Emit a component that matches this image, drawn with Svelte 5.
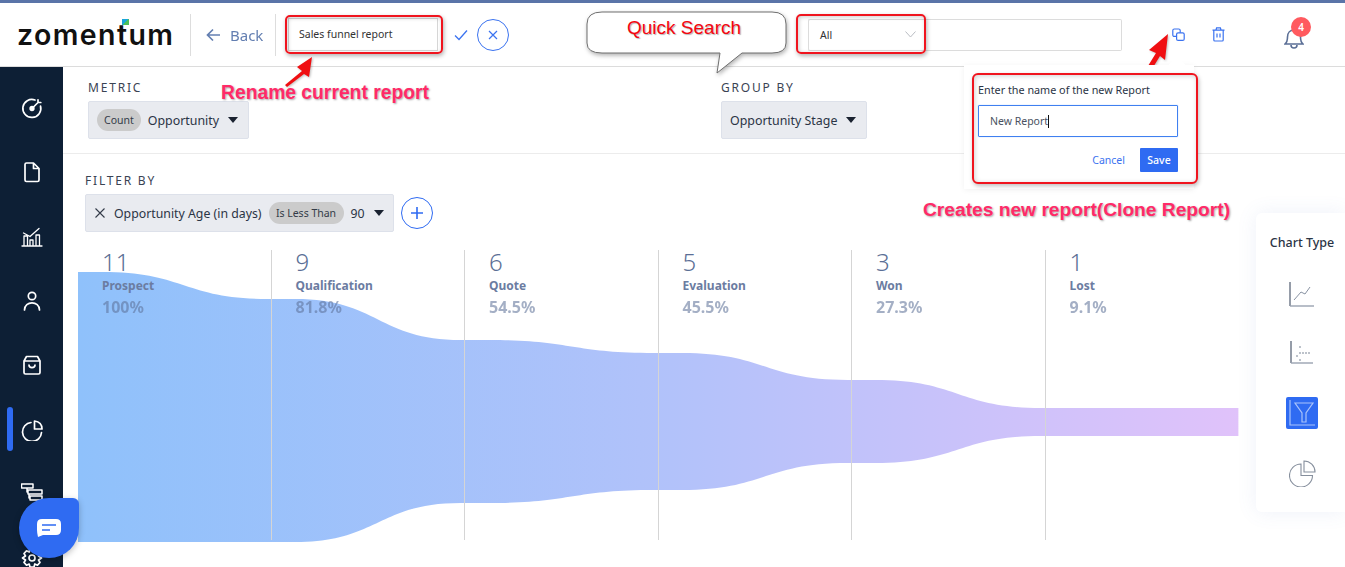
<script lang="ts">
  const navIcons = [
    'target',
    'file',
    'bars',
    'user',
    'bag',
    'pie',
    'tree',
    'gear',
  ];

  const stages = [
    { count: 11, name: 'Prospect', pct: '100%' },
    { count: 9, name: 'Qualification', pct: '81.8%' },
    { count: 6, name: 'Quote', pct: '54.5%' },
    { count: 5, name: 'Evaluation', pct: '45.5%' },
    { count: 3, name: 'Won', pct: '27.3%' },
    { count: 1, name: 'Lost', pct: '9.1%' },
  ];

  const COL_W = 193.4;
  // funnel edges at the column lines, x measured from funnel's left side
  const tops = [0, 27, 68, 81, 108, 136, 136];
  const bottoms = [270, 270, 231, 218, 191, 164, 164];
  // each step starts a bit after its column line and ends just before the next
  const LEAD = 24;
  const TAIL = 4;

  function funnelPath(): string {
    let d = `M 0 ${tops[0]}`;
    for (let i = 0; i < 6; i++) {
      const x1 = i * COL_W + LEAD;
      const x2 = (i + 1) * COL_W - TAIL;
      const m = (x1 + x2) / 2;
      d += ` L ${x1} ${tops[i]} C ${m} ${tops[i]}, ${m} ${tops[i + 1]}, ${x2} ${tops[i + 1]}`;
    }
    d += ` L ${6 * COL_W} ${tops[6]} L ${6 * COL_W} ${bottoms[6]}`;
    for (let i = 5; i >= 0; i--) {
      const x1 = i * COL_W + LEAD;
      const x2 = (i + 1) * COL_W - TAIL;
      const m = (x1 + x2) / 2;
      d += ` L ${x2} ${bottoms[i + 1]} C ${m} ${bottoms[i + 1]}, ${m} ${bottoms[i]}, ${x1} ${bottoms[i]}`;
    }
    return d + ` L 0 ${bottoms[0]} Z`;
  }
</script>

<div class="page">
  <header class="topbar">
    <div class="logo">zomen<span class="logo-t">t<i></i></span>um</div>
    <div class="back">
      <svg width="15" height="14" viewBox="0 0 15 14" fill="none" stroke="#5b78ad" stroke-width="1.7"><path d="M14 7 H1.5 M7 1.5 L1.5 7 L7 12.5" /></svg>
      <span>Back</span>
    </div>
    <div class="name-field">Sales funnel report</div>
    <svg class="check" width="14" height="12" viewBox="0 0 14 12" fill="none" stroke="#3b73f0" stroke-width="1.3"><path d="M1 6.5 L5 10.5 L13 1.5" /></svg>
    <div class="x-circle">
      <svg width="10" height="10" viewBox="0 0 10 10" fill="none" stroke="#3b73f0" stroke-width="1.2"><path d="M1 1 L9 9 M9 1 L1 9" /></svg>
    </div>
    <div class="search">
      <div class="search-type">
        <span>All</span>
        <svg width="11" height="7" viewBox="0 0 11 7" fill="none" stroke="#b9bcc2" stroke-width="1"><path d="M0.5 0.5 L5.5 6 L10.5 0.5" /></svg>
      </div>
      <div class="search-input"></div>
    </div>
    <svg class="copy" width="13" height="14" viewBox="0 0 13 14" fill="none" stroke="#3b73f0" stroke-width="1.2">
      <rect x="0.8" y="1" width="7.4" height="7.4" rx="1.5" />
      <rect x="4.6" y="4.8" width="7.6" height="7.6" rx="1.5" fill="#fff" />
    </svg>
    <svg class="trash" width="13" height="15" viewBox="0 0 13 15" fill="none" stroke="#3b73f0" stroke-width="1.2">
      <path d="M0.5 3.2 H12.5 M4 3 L4.6 0.8 H8.4 L9 3 M1.8 3.2 V13 Q1.8 14 2.8 14 H10.2 Q11.2 14 11.2 13 V3.2 M5 6.5 V10.5 M8 6.5 V10.5" />
    </svg>
    <div class="bell">
      <svg width="20" height="21" viewBox="0 0 20 21" fill="none" stroke="#5b6f96" stroke-width="1.6">
        <path d="M1 16 H19 C16.5 14 16.5 12 16.5 9 C16.5 5 14 2 10 2 C6 2 3.5 5 3.5 9 C3.5 12 3.5 14 1 16 Z M7 17 C7 21 13 21 13 17" />
      </svg>
      <span class="badge">4</span>
    </div>
  </header>

  <div class="body">
    <nav class="sidebar">
      {#each navIcons as icon}
        <div class="nav-item" class:active={icon === 'pie'}>
          <svg width="22" height="22" viewBox="0 0 22 22" fill="none" stroke="#fff" stroke-width="1.7" stroke-linecap="round" stroke-linejoin="round">
            {#if icon === 'target'}
              <path d="M14 3 A9 9 0 1 0 19.5 9" />
              <circle cx="11" cy="11.5" r="1.8" fill="#fff" />
              <path d="M11 11.5 L17 5.5 M17 2.8 L17 5.5 L19.8 5.5" />
            {:else if icon === 'file'}
              <path d="M4 3.5 Q4 2 5.5 2 H12.5 L18 7.5 V19 Q18 20.5 16.5 20.5 H5.5 Q4 20.5 4 19 Z M12.5 2 V7.5 H18" />
            {:else if icon === 'bars'}
              <path d="M1 20 H21 M3 19.5 V10 H6.5 V19.5 M9 19.5 V14 H12 V19.5 M15 19.5 V9 H18.5 V19.5 M2.5 7 L9 10.5 L18 2.5" stroke-width="1.3" />
            {:else if icon === 'user'}
              <circle cx="11" cy="6" r="3.7" />
              <path d="M3.5 20 C3.5 10.5 18.5 10.5 18.5 20" />
            {:else if icon === 'bag'}
              <path d="M3 7 L5.5 2.5 H16.5 L19 7 V18.5 Q19 20 17.5 20 H4.5 Q3 20 3 18.5 Z M3 7 H19 M8 11 C8 14.5 14 14.5 14 11" />
            {:else if icon === 'pie'}
              <path d="M10 3.5 A9.5 9.5 0 1 0 20.5 13.5" />
              <path d="M13.5 2 Q21 3 21 10 H13.5 Z" />
            {:else if icon === 'tree'}
              <path d="M0.5 1 H12 V5 H0.5 Z M7 7 H21 V11 H7 Z M9 13 H21 V17 H9 Z M6 5 V9 H7 M8 11 V15 H9" stroke-width="1.5" />
            {:else}
              <path d="M9 2 H13 L13.8 5 L16.5 3.8 L19 6.5 L17.5 9 L20.5 11 L17.5 13 L19 15.5 L16.5 18.2 L13.8 17 L13 20 H9 L8.2 17 L5.5 18.2 L3 15.5 L4.5 13 L1.5 11 L4.5 9 L3 6.5 L5.5 3.8 L8.2 5 Z" />
              <circle cx="11" cy="11" r="3" />
            {/if}
          </svg>
        </div>
      {/each}
    </nav>

    <main class="content">
      <section class="selectors">
        <div class="metric">
          <div class="label">METRIC</div>
          <div class="select">
            <span class="pill">Count</span>
            <span>Opportunity</span>
            <i class="caret"></i>
          </div>
        </div>
        <div class="group">
          <div class="label">GROUP BY</div>
          <div class="select">
            <span>Opportunity Stage</span>
            <i class="caret"></i>
          </div>
        </div>
      </section>

      <section class="filters">
        <div class="label">FILTER BY</div>
        <div class="filter-row">
          <div class="select filter">
            <svg width="10" height="10" viewBox="0 0 10 10" fill="none" stroke="#333b48" stroke-width="1.1"><path d="M0.5 0.5 L9.5 9.5 M9.5 0.5 L0.5 9.5" /></svg>
            <span>Opportunity Age (in days)</span>
            <span class="pill">Is Less Than</span>
            <span>90</span>
            <i class="caret"></i>
          </div>
          <div class="add">
            <svg width="12" height="12" viewBox="0 0 12 12" fill="none" stroke="#2f6bf2" stroke-width="1.6"><path d="M6 0 V12 M0 6 H12" /></svg>
          </div>
        </div>
      </section>

      <section class="funnel">
        <svg class="funnel-svg" width="1161" height="271" viewBox="0 0 1161 271">
          <defs>
            <linearGradient id="funnel-fill" x1="0" y1="0" x2="1" y2="0">
              <stop offset="0" stop-color="#8fc1fb" />
              <stop offset="0.5" stop-color="#b1c2fa" />
              <stop offset="1" stop-color="#e0c2fa" />
            </linearGradient>
          </defs>
          <path d={funnelPath()} fill="url(#funnel-fill)" />
        </svg>
        <div class="stages">
          {#each stages as s}
            <div class="stage">
              <div class="count">{s.count}</div>
              <div class="stage-name">{s.name}</div>
              <div class="pct">{s.pct}</div>
            </div>
          {/each}
        </div>
      </section>
    </main>

    <aside class="chart-types">
      <div class="chart-title">Chart Type</div>
      <svg width="26" height="26" viewBox="0 0 26 26" fill="none" stroke="#2d3b52" stroke-width="1">
        <path d="M1 1 V25" />
        <path d="M1 25 H25" stroke="#9aa3b0" stroke-width="1.4" />
        <path d="M5 19 L12 11 L16 13 L21 6" stroke="#8993a3" />
      </svg>
      <svg width="24" height="24" viewBox="0 0 24 24" fill="none" stroke="#2d3b52" stroke-width="1">
        <path d="M1 1 V23" />
        <path d="M1 23 H23" stroke="#9aa3b0" stroke-width="1.4" />
        <path d="M7 15 V17 M10 12 V14 M10 19 V21 M10 6 V8 M13 12 V14 M16 12 V14 M19 12 V14" stroke="#7d8797" />
      </svg>
      <div class="chart-active">
        <svg width="26" height="26" viewBox="0 0 26 26" fill="none" stroke="#a9c3fb" stroke-width="1.2">
          <path d="M1 0 V25 H26" />
          <path d="M6 3 H24 L17 13 V22 H13 V13 Z" />
        </svg>
      </div>
      <svg width="27" height="27" viewBox="0 0 27 27" fill="none" stroke="#868f9d" stroke-width="1.1">
        <path d="M12 4 A11.5 11.5 0 1 0 23.5 15.5 H12 Z" />
        <path d="M15 1 A11 11 0 0 1 26 12 H15 Z" />
      </svg>
    </aside>
  </div>

  <!-- screenshot annotations over the page -->
  <div class="mark mark-name"></div>
  <div class="mark mark-all"></div>
  <svg class="arrow arrow-name" width="30" height="32" viewBox="0 0 30 32"><path d="M28 1 L13 11 L18 15 L1 29 L3 31 L20 18 L25 21 Z" fill="#f00f12" /></svg>
  <svg class="arrow arrow-copy" width="24" height="37" viewBox="0 0 24 37"><path d="M22 1 L3 17 L10 20 L2 33 L6 36 L14 23 L19 27 Z" fill="#f00f12" /></svg>
  <div class="note note-rename">Rename current report</div>
  <div class="note note-clone">Creates new report(Clone Report)</div>

  <svg class="bubble" width="206" height="64" viewBox="0 0 206 64">
    <path d="M17 1 H187 Q201 1 201 13 V32 Q201 42 187 42 H157 L132 62 L135 42 H17 Q2 42 2 32 V13 Q2 1 17 1 Z" fill="#fff" stroke="#6f6f6f" stroke-width="1" />
  </svg>
  <div class="bubble-text">Quick Search</div>

  <div class="popover">
    <span class="pop-tip"></span>
    <div class="pop-inner">
      <div class="pop-title">Enter the name of the new Report</div>
      <div class="pop-input"><span>New Report</span><i></i></div>
      <div class="pop-actions">
        <span class="cancel">Cancel</span>
        <span class="save">Save</span>
      </div>
    </div>
  </div>

  <div class="chat">
    <svg width="24" height="18" viewBox="0 0 24 18">
      <path d="M5 0 H19 Q24 0 24 5 V11 Q24 16 19 16 H6 L1 18 Q0 14 0 11 V5 Q0 0 5 0 Z" fill="#fff" />
      <path d="M5 6 H19 M5 11 H13" stroke="#2f6bf2" stroke-width="1.6" />
    </svg>
  </div>
</div>

<style>
  :global(body) {
    margin: 0;
    background: #fff;
    overflow: hidden;
  }

  .page {
    position: relative;
    width: 1345px;
    height: 567px;
    overflow: hidden;
    font-family: 'Noto Sans', sans-serif;
    color: #2b3445;
    display: flex;
    flex-direction: column;
  }

  .topbar {
    height: 63px;
    flex: none;
    display: flex;
    align-items: center;
    border-top: 3px solid #5a74a8;
    border-bottom: 1px solid #dcdcdc;
    background: #fff;
  }

  .logo {
    width: 179px;
    flex: none;
    padding-left: 17px;
    box-sizing: border-box;
    font-family: 'Inter', sans-serif;
    font-size: 28.5px;
    font-weight: 600;
    color: #111;
    line-height: 30px;
    white-space: nowrap;
    letter-spacing: 1.4px;
  }

  .logo-t {
    position: relative;
  }

  .logo-t i {
    position: absolute;
    right: -1px;
    top: 2px;
    width: 7px;
    height: 6px;
    background: linear-gradient(135deg, #1aa6d9 50%, #4cc15c 50%);
  }

  .back {
    width: 86px;
    height: 42px;
    flex: none;
    box-sizing: border-box;
    display: flex;
    align-items: center;
    gap: 9px;
    margin-left: 11px;
    padding-left: 15px;
    border-left: 1px solid #dcdcdc;
    border-right: 1px solid #dcdcdc;
    margin-right: 12px;
    color: #5b78ad;
    font-size: 15px;
    opacity: 0.95;
  }

  .name-field {
    width: 150px;
    height: 33px;
    flex: none;
    box-sizing: border-box;
    padding-left: 10px;
    border: 1px solid #d6d6d6;
    font-size: 10.5px;
    line-height: 31px;
    color: #333;
  }

  .check {
    margin-left: 16px;
    flex: none;
  }

  .x-circle {
    width: 32px;
    height: 32px;
    margin-left: 9px;
    flex: none;
    box-sizing: border-box;
    border: 1px solid #3b73f0;
    border-radius: 50%;
    display: flex;
    align-items: center;
    justify-content: center;
  }

  .search {
    display: flex;
    margin-left: 299px;
    flex: none;
  }

  .search-type {
    width: 115px;
    height: 32px;
    box-sizing: border-box;
    border: 1px solid #dcdcdc;
    border-right: none;
    border-radius: 2px 0 0 2px;
    display: flex;
    align-items: center;
    justify-content: space-between;
    padding: 0 7px 0 11px;
    font-size: 10.5px;
    color: #333;
  }

  .search-input {
    width: 199px;
    height: 32px;
    box-sizing: border-box;
    border: 1px solid #dcdcdc;
    border-left: none;
    border-radius: 0 2px 2px 0;
  }

  .copy {
    margin-left: 50px;
    flex: none;
  }

  .trash {
    margin-left: 27px;
    flex: none;
  }

  .bell {
    position: relative;
    margin-left: 59px;
    width: 20px;
    height: 21px;
    margin-top: 7px;
    flex: none;
  }

  .badge {
    position: absolute;
    left: 7px;
    top: -11px;
    width: 20px;
    height: 20px;
    border-radius: 50%;
    background: #ff5a5f;
    color: #fff;
    font-size: 10px;
    font-weight: 600;
    text-align: center;
    line-height: 20px;
  }

  .body {
    flex: 1;
    display: flex;
    position: relative;
    min-height: 0;
  }

  .sidebar {
    width: 63px;
    flex: none;
    background: #0d1f35;
    display: flex;
    flex-direction: column;
    padding-top: 9px;
    box-sizing: border-box;
  }

  .nav-item {
    height: 64.3px;
    flex: none;
    display: flex;
    align-items: center;
    justify-content: center;
    padding-left: 1px;
    position: relative;
  }

  .nav-item.active::before {
    content: '';
    position: absolute;
    left: 7px;
    top: 10px;
    width: 6px;
    height: 44px;
    background: #2f6bf2;
    border-radius: 3px;
  }

  .content {
    flex: 1;
    min-width: 0;
    display: flex;
    flex-direction: column;
  }

  .selectors {
    display: flex;
    height: 87px;
    flex: none;
    box-sizing: border-box;
    padding: 14px 0 0 25px;
    border-bottom: 1px solid #ececec;
  }

  .metric {
    width: 633px;
  }

  .label {
    font-size: 12px;
    letter-spacing: 1.8px;
    line-height: 14px;
    color: #3a4353;
    margin-bottom: 6px;
  }

  .select {
    display: inline-flex;
    align-items: center;
    height: 38px;
    box-sizing: border-box;
    padding: 0 10px 0 8px;
    gap: 7px;
    background: #e9ebf0;
    border: 1px solid #dde1ea;
    border-radius: 2px;
    font-size: 12.4px;
    color: #2b3445;
  }

  .pill {
    height: 22px;
    line-height: 22px;
    padding: 0 7px;
    border-radius: 11px;
    background: #cbcbcb;
    font-size: 10.5px;
    color: #333b48;
  }

  .caret {
    width: 0;
    height: 0;
    margin-left: 2px;
    border-left: 5.5px solid transparent;
    border-right: 5.5px solid transparent;
    border-top: 6px solid #1a2230;
  }

  .filters {
    flex: none;
    padding: 20px 0 0 22px;
  }

  .filter-row {
    display: flex;
    align-items: center;
    gap: 7px;
  }

  .filter {
    padding-left: 9px;
    gap: 7px;
    padding-right: 9px;
    font-size: 12.3px;
  }

  .filter svg {
    margin-right: 2px;
  }

  .filter .pill {
    width: 75px;
    box-sizing: border-box;
    padding: 0;
    text-align: center;
  }

  .add {
    width: 32px;
    height: 32px;
    box-sizing: border-box;
    border: 1px solid #2f6bf2;
    border-radius: 50%;
    display: flex;
    align-items: center;
    justify-content: center;
  }

  .funnel {
    position: relative;
    flex: none;
    margin: 18px 0 0 15px;
    height: 292px;
  }

  .funnel-svg {
    position: absolute;
    left: 0;
    top: 22px;
    display: block;
  }

  .stages {
    position: relative;
    display: grid;
    grid-template-columns: repeat(6, 193.5px);
    height: 290px;
  }

  .stage {
    padding-left: 24px;
    box-sizing: border-box;
    border-right: 1px solid #d5d5d5;
  }

  .stage:last-child {
    border-right: none;
  }

  .count {
    font-size: 24px;
    font-weight: 300;
    line-height: 24px;
    color: #5b6f96;
  }

  .stage-name {
    font-size: 12px;
    font-weight: 700;
    line-height: 16px;
    margin-top: 4px;
    color: #6b7ca1;
  }

  .pct {
    font-size: 16px;
    font-weight: 700;
    line-height: 22px;
    margin-top: 2px;
    color: #5b6f96;
    opacity: 0.55;
  }

  .chart-types {
    position: absolute;
    right: 0;
    top: 146px;
    width: 89px;
    height: 299px;
    box-sizing: border-box;
    background: #fff;
    border-radius: 6px 0 0 6px;
    box-shadow: 0 0 20px rgba(90, 116, 200, 0.1);
    display: flex;
    flex-direction: column;
    align-items: center;
    padding-left: 3px;
  }

  .chart-title {
    font-size: 12.5px;
    font-weight: 500;
    margin-top: 21px;
    margin-bottom: 30px;
    color: #2b3445;
    white-space: nowrap;
  }

  .chart-types > svg:nth-of-type(1) {
    margin-bottom: 33px;
  }

  .chart-types > svg:nth-of-type(2) {
    margin-bottom: 33px;
  }

  .chart-active {
    width: 32px;
    height: 32px;
    background: #2f6bf2;
    border-radius: 2px;
    display: flex;
    align-items: center;
    justify-content: center;
    margin-bottom: 31px;
  }

  /* annotations */
  .mark {
    position: absolute;
    box-sizing: border-box;
    border: 2px solid #f0141e;
    border-radius: 5px;
    box-shadow: 1px 2px 4px rgba(0, 0, 0, 0.3), inset 1px 1px 4px rgba(0, 0, 0, 0.2);
  }

  .mark-name {
    left: 285px;
    top: 15px;
    width: 158px;
    height: 39px;
  }

  .mark-all {
    left: 796px;
    top: 14px;
    width: 130px;
    height: 40px;
  }

  .arrow {
    position: absolute;
    filter: drop-shadow(1px 1px 1px rgba(0, 0, 0, 0.25));
  }

  .arrow-name {
    left: 284px;
    top: 56px;
  }

  .arrow-copy {
    left: 1146px;
    top: 33px;
  }

  .note {
    position: absolute;
    font-family: 'Liberation Sans', Arial, sans-serif;
    font-weight: 700;
    color: #ff2a68;
    text-shadow: 1px 1px 2px rgba(0, 0, 0, 0.35), 0 0 2px #fff;
    white-space: nowrap;
  }

  .note-rename {
    left: 221px;
    top: 81px;
    font-size: 19.3px;
    line-height: 24px;
  }

  .note-clone {
    left: 923px;
    top: 198px;
    font-size: 19.2px;
    line-height: 24px;
  }

  .bubble {
    position: absolute;
    left: 585px;
    top: 11px;
    filter: drop-shadow(1px 2px 2px rgba(0, 0, 0, 0.3));
  }

  .bubble-text {
    position: absolute;
    left: 627px;
    top: 17px;
    font-family: 'Liberation Sans', Arial, sans-serif;
    font-size: 19px;
    line-height: 22px;
    color: #f5050f;
    text-shadow: 1px 1px 1px rgba(0, 0, 0, 0.3);
    white-space: nowrap;
  }

  .popover {
    position: absolute;
    left: 964px;
    top: 65px;
    width: 230px;
    height: 124px;
    background: #fff;
    box-shadow: 0 1px 6px rgba(0, 0, 0, 0.06);
  }

  .pop-tip {
    position: absolute;
    left: 207px;
    top: -6px;
    width: 12px;
    height: 12px;
    background: #fff;
    transform: rotate(45deg);
  }

  .pop-inner {
    position: relative;
    margin: 8px 0 0 8px;
    width: 226px;
    height: 111px;
    box-sizing: border-box;
    border: 2px solid #f0141e;
    border-radius: 6px;
    padding: 7px 0 0 4px;
    box-shadow: 1px 2px 4px rgba(0, 0, 0, 0.25), inset 1px 1px 5px rgba(0, 0, 0, 0.18);
    background: #fff;
  }

  .pop-title {
    font-size: 10.8px;
    line-height: 16px;
    color: #2b3445;
    white-space: nowrap;
  }

  .pop-input {
    margin-top: 7px;
    width: 200px;
    height: 32px;
    box-sizing: border-box;
    border: 1px solid #3f80f0;
    box-shadow: 0 0 1px #7aa8f7;
    border-radius: 1px;
    display: flex;
    align-items: center;
    padding-left: 11px;
    font-size: 10.5px;
    color: #4a5261;
  }

  .pop-input i {
    width: 1px;
    height: 13px;
    background: #111;
  }

  .pop-actions {
    display: flex;
    align-items: center;
    justify-content: flex-end;
    width: 200px;
    margin-top: 11px;
    gap: 15px;
    font-size: 10.5px;
  }

  .cancel {
    color: #3b73f0;
  }

  .save {
    width: 38px;
    height: 24px;
    line-height: 24px;
    text-align: center;
    background: #2f6bf2;
    color: #fff;
    border-radius: 1px;
    font-weight: 500;
  }

  .chat {
    position: absolute;
    left: 19px;
    top: 498px;
    width: 60px;
    height: 60px;
    background: #2f6bf2;
    border-radius: 50% 6px 50% 50%;
    box-shadow: 0 2px 6px rgba(0, 0, 0, 0.25);
    display: flex;
    align-items: center;
    justify-content: center;
  }
</style>
